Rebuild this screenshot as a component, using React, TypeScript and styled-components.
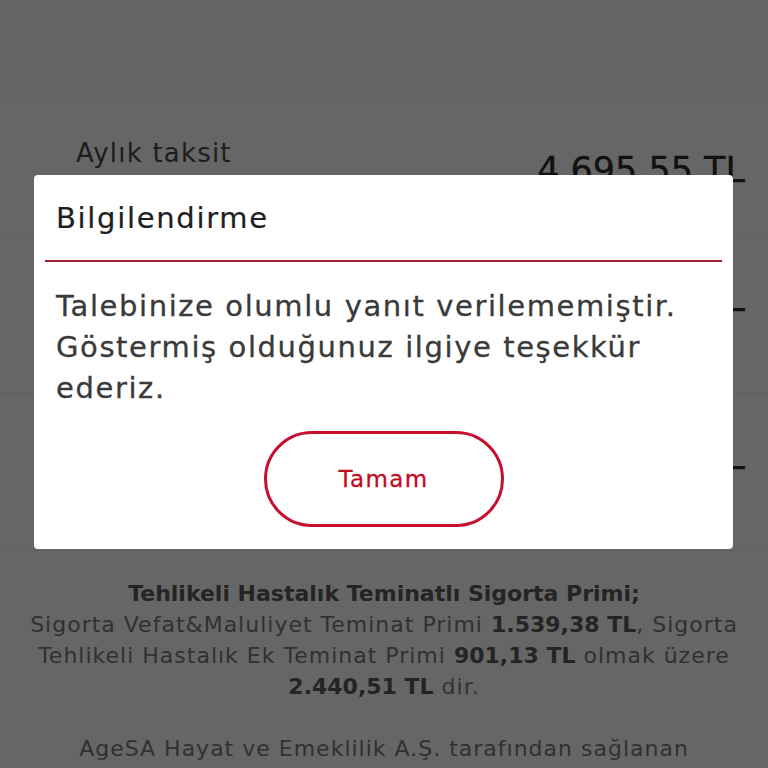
import React from 'react'
import styled, { createGlobalStyle } from 'styled-components'

const GlobalStyle = createGlobalStyle`
  html, body {
    margin: 0;
    padding: 0;
    background: #ffffff;
  }

  body {
    font-family: 'DejaVu Sans', 'Noto Sans', sans-serif;
    overflow: hidden;
  }
`

const Page = styled.div`
  display: flex;
  flex-direction: column;
  height: 768px;
  overflow: hidden;
  width: 768px;
`

const Header = styled.div`
  border-bottom: 2px solid #ffffff;
  background: #fbfbfb;
  height: 104px;
`

const Row = styled.div<{ $height: number }>`
  align-items: flex-start;
  border-bottom: 1px solid #f0f0f0;
  box-sizing: border-box;
  display: flex;
  height: ${({ $height }) => $height}px;
  justify-content: space-between;
  padding: 0 23px 0 76px;
`

const RowLabel = styled.span`
  color: #4b4b4b;
  font-size: 26px;
  letter-spacing: 1.2px;
  margin-top: 32px;
`

const RowValue = styled.span`
  color: #2b2b2b;
  font-size: 35px;
  margin-left: auto;
  margin-top: 44px;
  -webkit-text-stroke: 0.3px #2b2b2b;
`

const Info = styled.p`
  color: #7a7a7a;
  font-size: 22px;
  letter-spacing: 1px;
  line-height: 31px;
  margin: 27px 0 0;
  text-align: center;
  white-space: nowrap;

  b {
    color: #5a5a5a;
    font-weight: 700;
    letter-spacing: 0;
  }
`

const Overlay = styled.div`
  background: rgba(0, 0, 0, 0.6);
  display: flex;
  inset: 0;
  justify-content: center;
  padding-top: 175px;
  position: fixed;
`

const Dialog = styled.div`
  align-items: center;
  align-self: flex-start;
  background: #ffffff;
  border-radius: 4px;
  box-sizing: border-box;
  display: flex;
  flex-direction: column;
  height: 374px;
  margin-left: -1px;
  padding: 26px 11px 22px;
  width: 699px;
`

const Title = styled.h2`
  align-self: stretch;
  color: #1e1e1e;
  font-size: 29px;
  font-weight: 400;
  letter-spacing: 1.7px;
  line-height: 34px;
  margin: 0;
  padding: 0 11px;
  -webkit-text-stroke: 0.2px #1e1e1e;
`

const Divider = styled.hr`
  align-self: stretch;
  border: 0;
  border-top: 2px solid #9b2335;
  margin: 25px 0 0;
`

const Message = styled.p`
  align-self: stretch;
  color: #3a3a3a;
  font-size: 29px;
  letter-spacing: 1.6px;
  line-height: 41px;
  margin: 24px 0 0;
  padding: 0 11px;
  -webkit-text-stroke: 0.3px #3a3a3a;
`

const OkButton = styled.button`
  background: #ffffff;
  border: 3px solid #c8102e;
  border-radius: 49px;
  color: #c00d1e;
  cursor: pointer;
  font-family: inherit;
  font-size: 23px;
  letter-spacing: 1.4px;
  height: 97px;
  margin-top: 22px;
  width: 240px;
  -webkit-text-stroke: 0.3px #c00d1e;
`

export default function App() {
  return (
    <>
      <GlobalStyle />
      <Page>
        <Header />
        <Row $height={129}>
          <RowLabel>Aylık taksit</RowLabel>
          <RowValue>4.695,55 TL</RowValue>
        </Row>
        <Row $height={158}>
          <RowValue>56.346,60 TL</RowValue>
        </Row>
        <Row $height={158}>
          <RowValue>500.000,00 TL</RowValue>
        </Row>
        <Info>
          <b>Tehlikeli Hastalık Teminatlı Sigorta Primi;</b>
          <br />
          Sigorta Vefat&amp;Maluliyet Teminat Primi <b>1.539,38 TL</b>, Sigorta
          <br />
          Tehlikeli Hastalık Ek Teminat Primi <b>901,13 TL</b> olmak üzere
          <br />
          <b>2.440,51 TL</b> dir.
          <br />
          <br />
          AgeSA Hayat ve Emeklilik A.Ş. tarafından sağlanan
        </Info>
      </Page>
      <Overlay>
        <Dialog role="dialog" aria-labelledby="dialog-title">
          <Title id="dialog-title">Bilgilendirme</Title>
          <Divider />
          <Message>
            Talebinize olumlu yanıt verilememiştir. Göstermiş olduğunuz ilgiye
            teşekkür ederiz.
          </Message>
          <OkButton type="button">Tamam</OkButton>
        </Dialog>
      </Overlay>
    </>
  )
}
